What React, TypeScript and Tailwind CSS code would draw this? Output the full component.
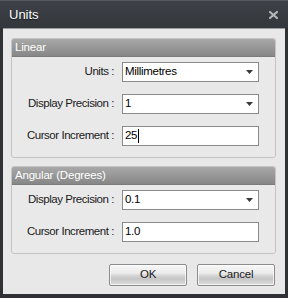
import React from 'react';

const font = "font-['Liberation_Sans',Arial,sans-serif]";

function Caret() {
  return (
    <svg viewBox="0 0 7 4" className="h-[4px] w-[7px]" fill="#3a3a3a">
      <path d="M0 0h7L3.5 4z" />
    </svg>
  );
}

function SelectBox({ value }: { value: string }) {
  return (
    <div className="flex h-[20px] w-[137px] items-center justify-between border border-[#8a8a8a] bg-white pl-[2px] pr-[5px] text-[11.5px] tracking-[-0.3px] text-black">
      <span>{value}</span>
      <Caret />
    </div>
  );
}

function TextBox({ value, caret }: { value: string; caret?: boolean }) {
  return (
    <div className="flex h-[20px] w-[137px] items-center border border-[#8a8a8a] bg-white pl-[2px] text-[11.5px] tracking-[-0.3px] text-black">
      <span>{value}</span>
      {caret && <span className="ml-px h-[14px] w-px bg-black" />}
    </div>
  );
}

function Row({ label, children }: { label: string; children: React.ReactNode }) {
  return (
    <div className="flex items-center">
      <div className="w-[103px] pr-px text-right text-[11.5px] tracking-[-0.45px] text-[#1a1a1a]">{label}</div>
      <div className="ml-[7px]">{children}</div>
    </div>
  );
}

function Group({ title, children }: { title: string; children: React.ReactNode }) {
  return (
    <div className="overflow-hidden rounded-[3px] border border-[#c4c4c4] bg-[#e9e9e9]">
      <div className="flex h-[18px] items-center border-b border-[#7c7c7c] bg-gradient-to-b from-[#a8a8a8] to-[#878787] pl-[3px] text-[11.5px] tracking-[-0.2px] text-white">
        {title}
      </div>
      <div className="flex flex-col gap-[12px] pb-[11px] pt-[5px]">{children}</div>
    </div>
  );
}

function Button({ label }: { label: string }) {
  return (
    <button
      className="h-[22px] w-[78px] rounded-[2px] border border-[#8c8c8c] text-[11.5px] tracking-[-0.2px] text-[#1a1a1a] shadow-[inset_0_0_0_1px_rgba(255,255,255,0.7)]"
      style={{
        background:
          'linear-gradient(180deg, #f7f7f7 0%, #ececec 40%, #d2d2d2 55%, #c6c6c6 70%, #dedede 100%)',
      }}
    >
      {label}
    </button>
  );
}

export default function App() {
  return (
    <div className={`flex h-[298px] w-[288px] flex-col bg-[#2f3135] ${font}`}>
      <div className="flex h-[28px] items-center justify-between border-t border-[#55585e] bg-gradient-to-b from-[#3e4147] to-[#33363b] pl-[9px] pr-[10px]">
        <span className="text-[13px] text-white [text-shadow:0_1px_1px_rgba(0,0,0,0.6)]">Units</span>
        <svg viewBox="0 0 9 8" className="h-[8px] w-[9px]" stroke="#b5b5b5" strokeWidth="2.2" strokeLinecap="square">
          <path d="M1 1l7 6M8 1L1 7" />
        </svg>
      </div>
      <div className="mx-[3px] mb-[4px] flex flex-1 flex-col gap-[8px] border-t border-[#9a9a9a] bg-[#e8e8e8] pl-[8px] pr-[9px] pt-[9px]">
        <Group title="Linear">
          <Row label="Units :">
            <SelectBox value="Millimetres" />
          </Row>
          <Row label="Display Precision :">
            <SelectBox value="1" />
          </Row>
          <Row label="Cursor Increment :">
            <TextBox value="25" caret />
          </Row>
        </Group>
        <Group title="Angular (Degrees)">
          <Row label="Display Precision :">
            <SelectBox value="0.1" />
          </Row>
          <Row label="Cursor Increment :">
            <TextBox value="1.0" />
          </Row>
        </Group>
        <div className="mt-[2px] flex justify-end gap-[10px] pr-px">
          <Button label="OK" />
          <Button label="Cancel" />
        </div>
      </div>
    </div>
  );
}
